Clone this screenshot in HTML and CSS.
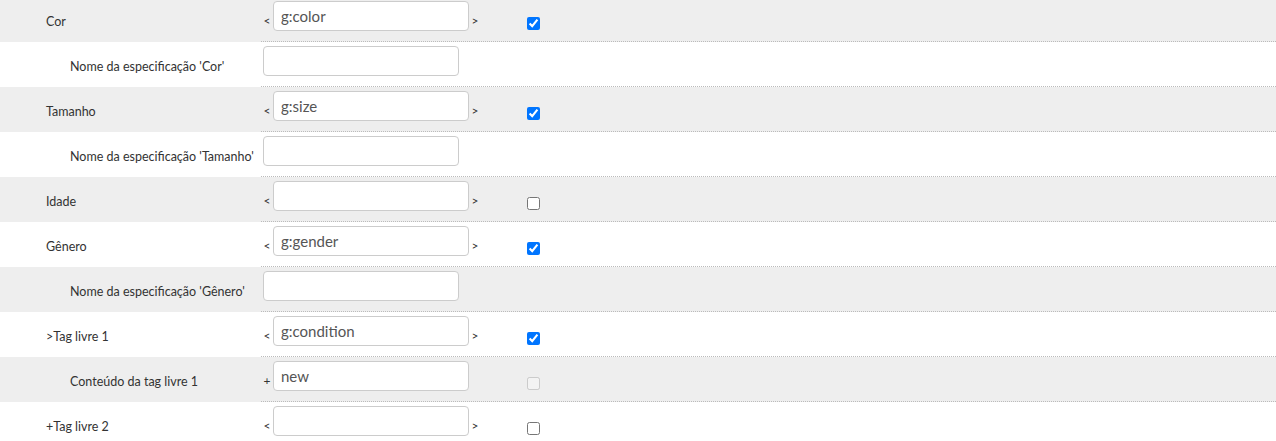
FILE: index.html
```html
<!DOCTYPE html>
<html lang="pt">
<head>
<meta charset="utf-8">
<title>Especificações</title>
<link rel="stylesheet" href="styles.css">
</head>
<body>
<div class="list">
  <div class="row gray">
    <div class="label">Cor</div>
    <div class="rest">
      <div class="field"><span class="sym">&lt;</span><input class="txt" type="text" value="g:color"><span class="sym">&gt;</span></div>
      <div class="check"><input type="checkbox" checked></div>
    </div>
  </div>
  <div class="row">
    <div class="label sub">Nome da especificação 'Cor'</div>
    <div class="rest">
      <div class="field"><input class="txt plain" type="text" value=""></div>
    </div>
  </div>
  <div class="row gray">
    <div class="label">Tamanho</div>
    <div class="rest">
      <div class="field"><span class="sym">&lt;</span><input class="txt" type="text" value="g:size"><span class="sym">&gt;</span></div>
      <div class="check"><input type="checkbox" checked></div>
    </div>
  </div>
  <div class="row">
    <div class="label sub">Nome da especificação 'Tamanho'</div>
    <div class="rest">
      <div class="field"><input class="txt plain" type="text" value=""></div>
    </div>
  </div>
  <div class="row gray">
    <div class="label">Idade</div>
    <div class="rest">
      <div class="field"><span class="sym">&lt;</span><input class="txt" type="text" value=""><span class="sym">&gt;</span></div>
      <div class="check"><input type="checkbox"></div>
    </div>
  </div>
  <div class="row">
    <div class="label">Gênero</div>
    <div class="rest">
      <div class="field"><span class="sym">&lt;</span><input class="txt" type="text" value="g:gender"><span class="sym">&gt;</span></div>
      <div class="check"><input type="checkbox" checked></div>
    </div>
  </div>
  <div class="row gray">
    <div class="label sub">Nome da especificação 'Gênero'</div>
    <div class="rest">
      <div class="field"><input class="txt plain" type="text" value=""></div>
    </div>
  </div>
  <div class="row">
    <div class="label">&gt;Tag livre 1</div>
    <div class="rest">
      <div class="field"><span class="sym">&lt;</span><input class="txt" type="text" value="g:condition"><span class="sym">&gt;</span></div>
      <div class="check"><input type="checkbox" checked></div>
    </div>
  </div>
  <div class="row gray">
    <div class="label sub">Conteúdo da tag livre 1</div>
    <div class="rest">
      <div class="field"><span class="sym">+</span><input class="txt" type="text" value="new"></div>
      <div class="check"><input type="checkbox" disabled></div>
    </div>
  </div>
  <div class="row">
    <div class="label">+Tag livre 2</div>
    <div class="rest">
      <div class="field"><span class="sym">&lt;</span><input class="txt" type="text" value=""><span class="sym">&gt;</span></div>
      <div class="check"><input type="checkbox"></div>
    </div>
  </div>
</div>
</body>
</html>
```

FILE: styles.css
```css
html, body {
  margin: 0;
  padding: 0;
  background: #fff;
}
body {
  font-family: Lato, "Liberation Sans", sans-serif;
  font-size: 12px;
  color: #333;
}
.list {
  margin-top: -3px;
}
.row {
  display: flex;
  height: 45px;
  background: #fff;
}
.row.gray {
  background: #eee;
}
.label {
  width: 261px;
  flex: none;
  box-sizing: border-box;
  padding-left: 46px;
  padding-top: 3px;
  display: flex;
  align-items: center;
  font-size: 12.5px;
  color: #333;
}
.label.sub {
  padding-left: 70px;
}
.rest {
  flex: 1;
  display: flex;
  border-bottom: 1px dotted #bbb;
}
.field {
  width: 259px;
  flex: none;
  padding-top: 4px;
  font-size: 12px;
  color: #333;
  white-space: nowrap;
}
.sym {
  display: inline-block;
  width: 12px;
  text-align: center;
  vertical-align: -3px;
}
.txt {
  box-sizing: border-box;
  width: 196px;
  height: 30px;
  margin: 0;
  padding: 0 7px;
  border: 1px solid #ccc;
  border-radius: 4px;
  background: #fff;
  font-family: Lato, "Liberation Sans", sans-serif;
  font-size: 15px;
  color: #555;
  vertical-align: baseline;
  outline: none;
}
.txt.plain {
  margin-left: 2px;
}
.check {
  padding-top: 20px;
}
.check input {
  margin: 0 0 0 7px;
  width: 13px;
  height: 13px;
  display: block;
}
```
